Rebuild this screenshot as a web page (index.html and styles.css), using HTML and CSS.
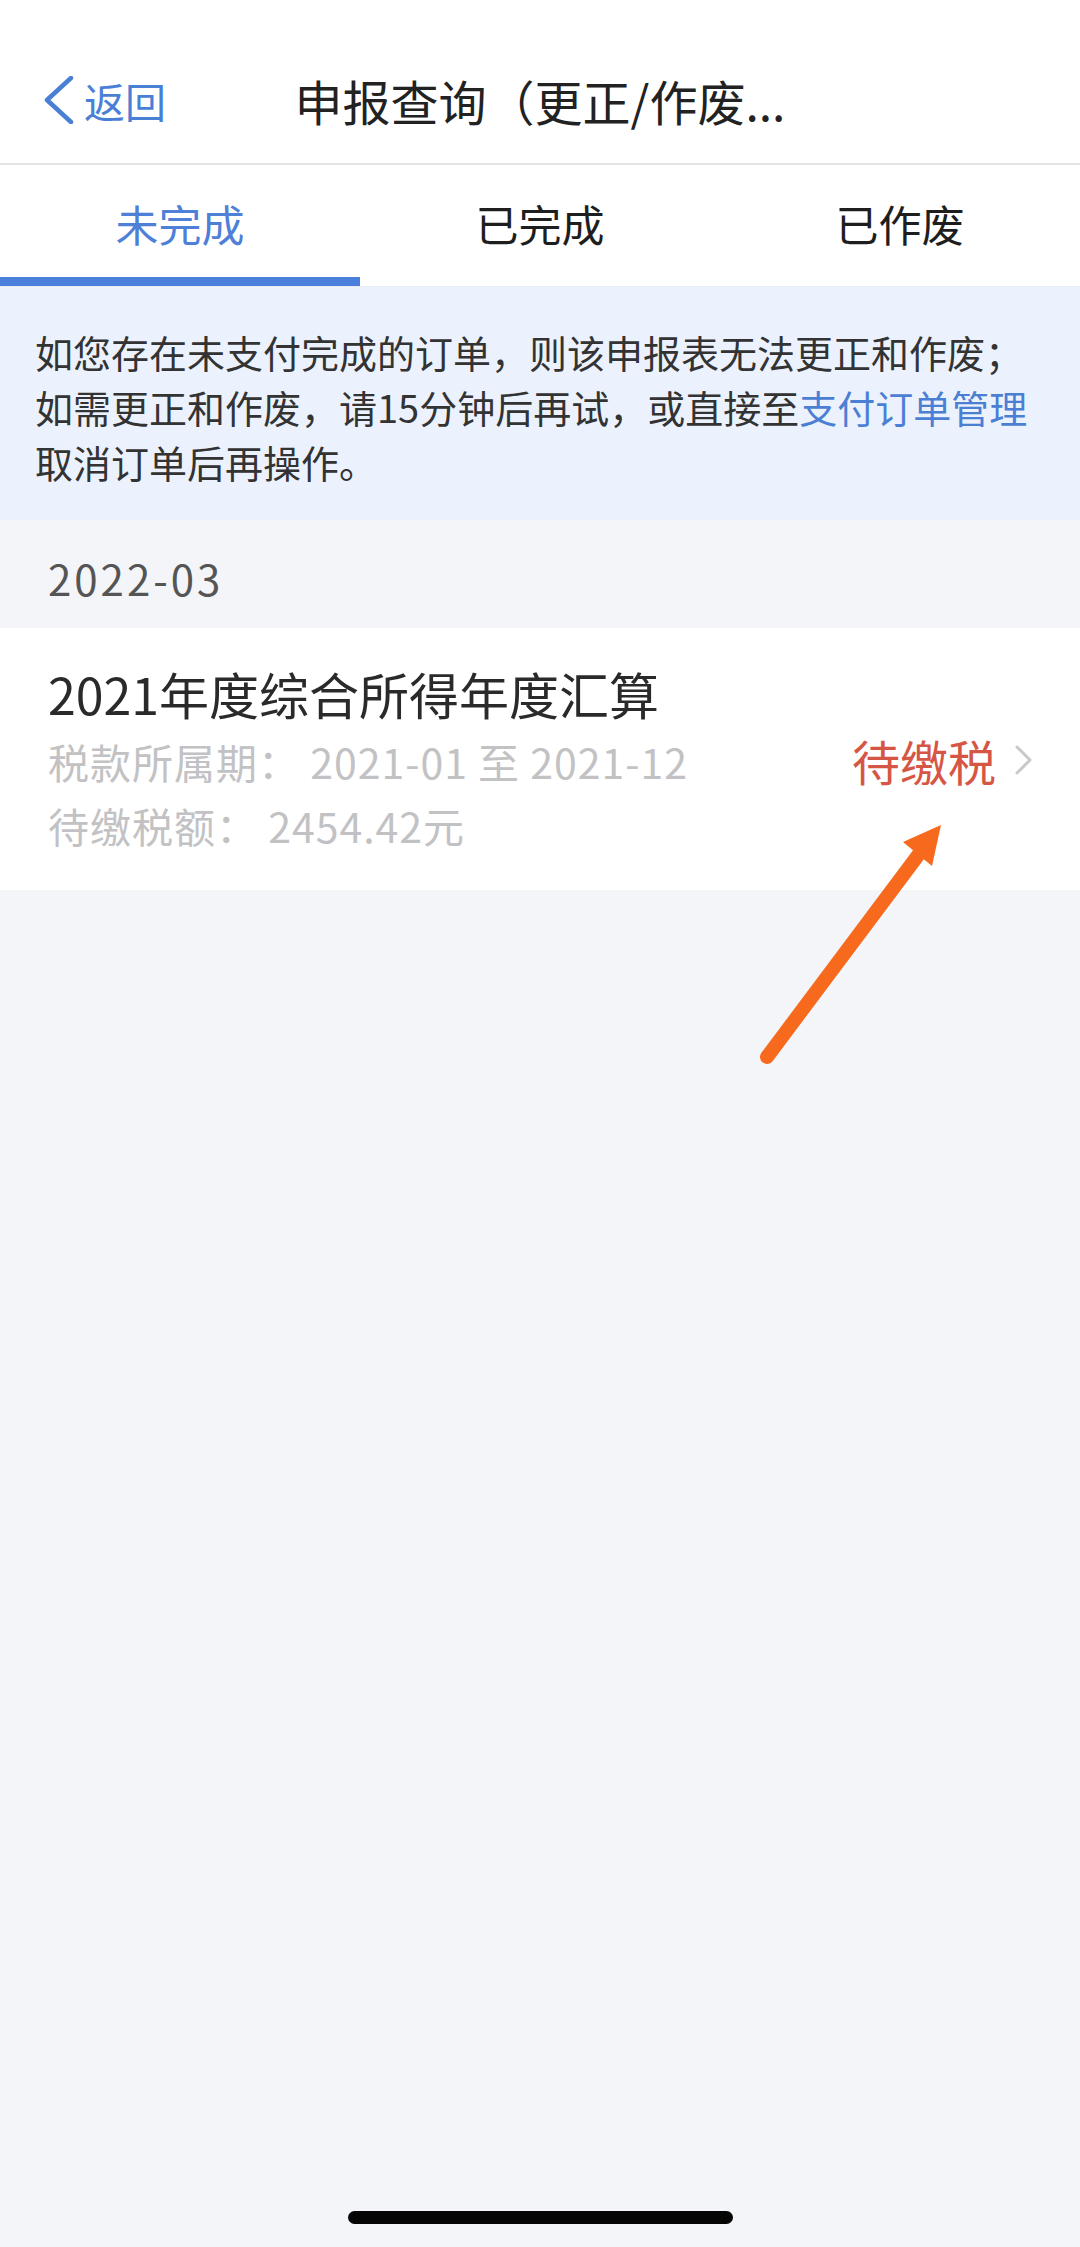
FILE: index.html
```html
<!DOCTYPE html>
<html lang="zh-CN">
<head>
<meta charset="utf-8">
<title>申报查询</title>
<link rel="stylesheet" href="styles.css">
</head>
<body>
<div class="page">
  <header class="navbar">
    <div class="nav-left">
      <svg class="back-icon" width="30" height="48" viewBox="0 0 30 48"><polyline points="27,2 3,24 27,46" fill="none" stroke="#4a7fd6" stroke-width="4.5" stroke-linecap="round" stroke-linejoin="round"/></svg>
      <span class="back-text">返回</span>
    </div>
    <div class="nav-title">申报查询（更正/作废...</div>
    <div class="nav-right"></div>
  </header>

  <nav class="tabs">
    <div class="tab tab-active">未完成</div>
    <div class="tab">已完成</div>
    <div class="tab">已作废</div>
  </nav>

  <section class="notice">
    <p class="notice-text">如您存在未支付完成的订单，则该申报表无法更正和作废；如需更正和作废，请15分钟后再试，或直接至<span class="link">支付订单管理</span>取消订单后再操作。</p>
  </section>

  <div class="group-date">2022-03</div>

  <div class="card">
    <div class="card-main">
      <div class="card-title">2021年度综合所得年度汇算</div>
      <div class="card-sub">税款所属期： 2021-01 至 2021-12</div>
      <div class="card-sub">待缴税额： 2454.42元</div>
    </div>
    <div class="card-side">
      <span class="status">待缴税</span>
      <svg class="chevron" width="20" height="30" viewBox="0 0 20 30"><polyline points="3,2 16,15 3,28" fill="none" stroke="#c8c8cd" stroke-width="3" stroke-linecap="round" stroke-linejoin="round"/></svg>
    </div>
  </div>

  <div class="filler"></div>

  <div class="home-bar-wrap"><div class="home-bar"></div></div>

  <svg class="annotation" width="1080" height="2247" viewBox="0 0 1080 2247">
    <line x1="767" y1="1057" x2="922" y2="850" stroke="#f76a1e" stroke-width="14" stroke-linecap="round"/>
    <polygon points="941,825 903,842 932,866" fill="#f76a1e"/>
  </svg>
</div>
</body>
</html>
```

FILE: styles.css
```css
* { box-sizing: border-box; margin: 0; padding: 0; }

html, body {
  width: 1080px;
  height: 2247px;
  background: #f4f5f9;
  font-family: "Noto Sans CJK SC", "Noto Sans", sans-serif;
  color: #2b2b2b;
}

.page {
  position: relative;
  width: 1080px;
  min-height: 2247px;
  display: flex;
  flex-direction: column;
  background: #f4f5f9;
  overflow: hidden;
}

/* nav bar */
.navbar {
  height: 165px;
  background: #ffffff;
  border-bottom: 2px solid #e4e4e6;
  display: grid;
  grid-template-columns: 1fr auto 1fr;
  align-items: center;
  padding-top: 36px;
}
.nav-left {
  display: flex;
  align-items: center;
  padding-left: 44px;
  gap: 10px;
  color: #4a7fd6;
}
.back-icon { display: block; }
.back-text {
  font-size: 41px;
  line-height: 48px;
  color: #4a7fd6;
}
.nav-title {
  font-size: 48px;
  line-height: 60px;
  color: #222222;
  white-space: nowrap;
}

/* tabs */
.tabs {
  height: 122px;
  background: #ffffff;
  display: grid;
  grid-template-columns: repeat(3, 1fr);
  border-bottom: 1px solid #e9ecf2;
}
.tab {
  display: flex;
  align-items: center;
  justify-content: center;
  font-size: 43px;
  color: #1e1e1e;
  padding-bottom: 6px;
}
.tab-active {
  color: #4f80d8;
  border-bottom: 9px solid #4a7fdc;
  padding-bottom: 0;
  padding-top: 3px;
}

/* notice */
.notice {
  background: #ebf2fd;
  padding: 37px 28px 32px 35px;
  height: 233px;
}
.notice-text {
  font-size: 38px;
  line-height: 55px;
  color: #333333;
}
.link { color: #4b7fd4; }

/* date group */
.group-date {
  height: 108px;
  display: flex;
  align-items: center;
  padding: 6px 0 0 48px;
  font-size: 42px;
  color: #555555;
  letter-spacing: 3px;
}

/* card */
.card {
  background: #ffffff;
  height: 262px;
  display: flex;
  align-items: center;
  justify-content: space-between;
  padding: 0 46px 0 48px;
}
.card-main {
  display: flex;
  flex-direction: column;
}
.card-title {
  font-size: 50px;
  line-height: 64px;
  color: #2a2a2a;
  margin-bottom: 4px;
}
.card-sub {
  font-size: 41px;
  line-height: 64px;
  color: #c2c2c4;
  letter-spacing: 1px;
  white-space: pre;
}
.card-side {
  display: flex;
  align-items: center;
  gap: 18px;
  margin-top: 2px;
}
.status {
  font-size: 48px;
  color: #d65645;
}
.chevron { display: block; }

.filler { flex: 1; }

.home-bar-wrap {
  height: 36px;
  display: flex;
  justify-content: center;
  padding-bottom: 23px;
  margin-left: 1px;
}
.home-bar {
  width: 385px;
  height: 13px;
  border-radius: 7px;
  background: #050505;
}

.annotation {
  position: absolute;
  left: 0;
  top: 0;
  pointer-events: none;
}
```
